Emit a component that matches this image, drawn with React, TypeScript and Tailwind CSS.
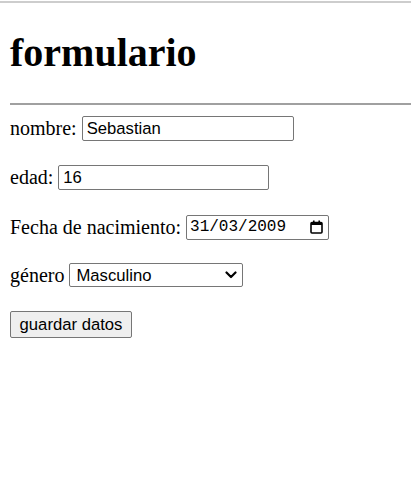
export default function App() {
  return (
    <div className="min-h-screen bg-white text-black font-['Liberation_Serif','Times_New_Roman',serif] text-[20px]">
      {/* top edge line */}
      <div className="mt-px h-[2px] bg-[#cdcdcd]" />

      <div className="pl-[10px]">
        <h1 className="mt-[27px] text-[40px] font-bold leading-[46px]">formulario</h1>
        <div className="mt-[27px] border-t-2 border-[#a0a0a0]" />

        <form className="flex flex-col items-start">
          <div className="mt-[10px] flex h-[26px] items-center gap-[5px]">
            <span>nombre:</span>
            <div className="flex h-[25px] w-[212px] items-center rounded-[2px] border border-[#767676] px-[4px] font-['Liberation_Sans',Arial,sans-serif] text-[16.67px]">
              Sebastian
            </div>
          </div>

          <div className="mt-[23px] flex h-[26px] items-center gap-[5px]">
            <span>edad:</span>
            <div className="flex h-[25px] w-[211px] items-center rounded-[2px] border border-[#767676] px-[4px] font-['Liberation_Sans',Arial,sans-serif] text-[16.67px]">
              16
            </div>
          </div>

          <div className="mt-[24px] flex h-[26px] items-center gap-[5px]">
            <span>Fecha de nacimiento:</span>
            <div className="flex h-[25px] w-[143px] items-center justify-between rounded-[2px] border border-[#767676] pl-[3px] pr-[5px] font-['Liberation_Mono','DejaVu_Sans_Mono',monospace] text-[16px]">
              <span>31/03/2009</span>
              <svg width="13" height="14" viewBox="0 0 13 14" fill="none">
                <rect x="1" y="2.5" width="11" height="10.5" stroke="black" strokeWidth="1.6" rx="1" />
                <rect x="1" y="2.5" width="11" height="2.5" fill="black" />
                <rect x="3" y="0.5" width="1.6" height="3" fill="black" />
                <rect x="8.4" y="0.5" width="1.6" height="3" fill="black" />
              </svg>
            </div>
          </div>

          <div className="mt-[22px] flex h-[26px] items-center gap-[5px]">
            <span>género</span>
            <div className="flex h-[24px] w-[174px] items-center justify-between rounded-[2px] border border-[#767676] pl-[6px] pr-[5px] font-['Liberation_Sans',Arial,sans-serif] text-[16.67px]">
              <span>Masculino</span>
              <svg width="12" height="8" viewBox="0 0 12 8" fill="none">
                <path d="M1.5 1.5 L6 6 L10.5 1.5" stroke="black" strokeWidth="2.2" strokeLinecap="round" strokeLinejoin="round" />
              </svg>
            </div>
          </div>

          <div className="mt-[22px] flex h-[28px] items-center">
            <button
              type="button"
              className="flex h-[27px] w-[122px] items-center justify-center rounded-[2px] border border-[#767676] bg-[#efefef] font-['Liberation_Sans',Arial,sans-serif] text-[16.67px]"
            >
              guardar datos
            </button>
          </div>
        </form>
      </div>
    </div>
  );
}
